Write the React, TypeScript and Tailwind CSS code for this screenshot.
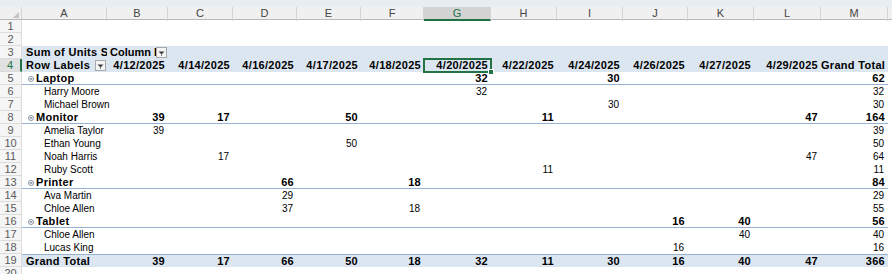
import React from "react";

const GRID = "grid grid-cols-[85px_61px_65px_64px_64px_63px_67px_66px_66px_65px_66px_67px_67px]";
const LETTERS = ["A", "B", "C", "D", "E", "F", "G", "H", "I", "J", "K", "L", "M"];
const DATES = ["4/12/2025", "4/14/2025", "4/16/2025", "4/17/2025", "4/18/2025", "4/20/2025", "4/22/2025", "4/24/2025", "4/26/2025", "4/27/2025", "4/29/2025"];

type V = number | null;
type Line = { label: string; kind: "group" | "item"; vals: V[] };

const _ = null;
const LINES: Line[] = [
  { label: "Laptop", kind: "group", vals: [_, _, _, _, _, 32, _, 30, _, _, _, 62] },
  { label: "Harry Moore", kind: "item", vals: [_, _, _, _, _, 32, _, _, _, _, _, 32] },
  { label: "Michael Brown", kind: "item", vals: [_, _, _, _, _, _, _, 30, _, _, _, 30] },
  { label: "Monitor", kind: "group", vals: [39, 17, _, 50, _, _, 11, _, _, _, 47, 164] },
  { label: "Amelia Taylor", kind: "item", vals: [39, _, _, _, _, _, _, _, _, _, _, 39] },
  { label: "Ethan Young", kind: "item", vals: [_, _, _, 50, _, _, _, _, _, _, _, 50] },
  { label: "Noah Harris", kind: "item", vals: [_, 17, _, _, _, _, _, _, _, _, 47, 64] },
  { label: "Ruby Scott", kind: "item", vals: [_, _, _, _, _, _, 11, _, _, _, _, 11] },
  { label: "Printer", kind: "group", vals: [_, _, 66, _, 18, _, _, _, _, _, _, 84] },
  { label: "Ava Martin", kind: "item", vals: [_, _, 29, _, _, _, _, _, _, _, _, 29] },
  { label: "Chloe Allen", kind: "item", vals: [_, _, 37, _, 18, _, _, _, _, _, _, 55] },
  { label: "Tablet", kind: "group", vals: [_, _, _, _, _, _, _, _, 16, 40, _, 56] },
  { label: "Chloe Allen", kind: "item", vals: [_, _, _, _, _, _, _, _, _, 40, _, 40] },
  { label: "Lucas King", kind: "item", vals: [_, _, _, _, _, _, _, _, 16, _, _, 16] },
];
const TOTALS = [39, 17, 66, 50, 18, 32, 11, 30, 16, 40, 47, 366];

function RowNum({ n, active }: { n: number; active?: boolean }) {
  return (
    <div
      className={
        active
          ? "h-[13px] w-[22px] shrink-0 border-b border-b-[#dadada] border-r-2 border-r-[#217346] bg-[#e1e1e1] text-center text-[11px] leading-[12px] text-[#217346]"
          : "h-[13px] w-[22px] shrink-0 border-b border-r border-[#dcdcdc] bg-[#f5f5f5] text-center text-[11px] leading-[12px] text-[#5b5b5b]"
      }
    >
      {n}
    </div>
  );
}

function Drop() {
  return (
    <span className="absolute right-[1px] top-[1px] flex h-[11px] w-[11px] items-center justify-center border border-[#a9a9a9] bg-[#f4f4f4]">
      <svg width="7" height="6" viewBox="0 0 7 6">
        <path d="M0.5 1.5h6L3.5 4.5z" fill="#3c3c3c" />
        <path d="M3.5 4.5v1.2" stroke="#3c3c3c" strokeWidth="1" />
      </svg>
    </span>
  );
}

function Toggle() {
  return (
    <svg width="6" height="6" viewBox="0 0 6 6" className="mr-[2px] shrink-0">
      <circle cx="3" cy="3" r="2.5" fill="#fff" stroke="#7f8a99" strokeWidth="0.9" />
      <path d="M1.8 3h2.4" stroke="#44546a" strokeWidth="1" />
    </svg>
  );
}

function Num({ v, bold }: { v: V; bold?: boolean }) {
  return (
    <div
      className={
        bold
          ? "pr-[3px] text-right text-[11px] font-bold leading-[13px] tracking-[0.3px] text-black"
          : "pr-[4px] text-right text-[10px] leading-[13px] text-black"
      }
    >
      {v ?? ""}
    </div>
  );
}

export default function App() {
  return (
    <div className="h-[274px] w-[892px] overflow-hidden bg-white font-['Liberation_Sans',Arial,sans-serif]">
      <div className="h-[7px] bg-[#e6eef2]" />
      {/* column headers */}
      <div className="flex h-[13px] border-b border-[#b8b8b8] bg-[#f0f0f0]">
        <div className="relative w-[22px] shrink-0 border-r border-[#d4d4d4]">
          <svg width="6" height="6" viewBox="0 0 6 6" className="absolute bottom-[1px] right-[2px]">
            <path d="M6 0V6H0z" fill="#c4c4c4" />
          </svg>
        </div>
        <div className={GRID}>
          {LETTERS.map((l) => (
            <div
              key={l}
              className={
                l === "G"
                  ? "border-b-2 border-r border-b-[#217346] border-r-[#d4d4d4] bg-[#d3d3d3] text-center text-[11px] leading-[12px] text-[#217346]"
                  : "border-r border-[#d4d4d4] text-center text-[11px] leading-[12px] text-[#444]"
              }
            >
              {l}
            </div>
          ))}
        </div>
        <div className="flex-1" />
      </div>

      <div className="flex">
        <RowNum n={1} />
      </div>
      <div className="flex">
        <RowNum n={2} />
      </div>

      {/* row 3 */}
      <div className="flex">
        <RowNum n={3} />
        <div className={`${GRID} h-[13px] bg-[#dce6f1]`}>
          <div className="overflow-hidden whitespace-nowrap pl-[4px] text-[11px] font-bold leading-[13px] tracking-[0.3px]">Sum of Units Sold</div>
          <div className="relative overflow-hidden whitespace-nowrap pl-[3px] text-[11px] font-bold leading-[13px]">
            <div className="mr-[11px] overflow-hidden">Column Labels</div>
            <Drop />
          </div>
          {Array.from({ length: 11 }).map((_, i) => (
            <div key={i} />
          ))}
        </div>
      </div>

      {/* row 4 */}
      <div className="flex">
        <RowNum n={4} active />
        <div className={`${GRID} h-[13px] bg-[#dce6f1]`}>
          <div className="relative whitespace-nowrap pl-[4px] text-[11px] font-bold leading-[13px] tracking-[0.3px]">
            Row Labels
            <Drop />
          </div>
          {DATES.map((d) => (
            <div key={d} className="relative whitespace-nowrap pr-[3px] text-right text-[11px] font-bold leading-[13px] tracking-[0.3px]">
              {d}
              {d === "4/20/2025" && (
                <>
                  <span className="pointer-events-none absolute -left-[1px] -right-[1px] -top-[1px] -bottom-[1px] border-2 border-[#217346]" />
                  <span className="absolute -bottom-[3px] -right-[3px] h-[6px] w-[6px] border border-white bg-[#217346]" />
                </>
              )}
            </div>
          ))}
          <div className="whitespace-nowrap pr-[3px] text-right text-[11px] font-bold leading-[13px] tracking-[0.3px]">Grand Total</div>
        </div>
      </div>

      {LINES.map((r, i) => {
        const group = r.kind === "group";
        return (
          <div key={i} className="flex">
            <RowNum n={i + 5} />
            <div className={`${GRID} h-[13px] ${group ? "border-b border-[#95b3d7]" : ""}`}>
              {group ? (
                <div className="flex items-center whitespace-nowrap pl-[6px] text-[11px] font-bold leading-[13px] tracking-[0.3px]">
                  <Toggle />
                  {r.label}
                </div>
              ) : (
                <div className="whitespace-nowrap pl-[22px] text-[10px] leading-[13px]">{r.label}</div>
              )}
              {r.vals.map((v, j) => (
                <Num key={j} v={v} bold={group} />
              ))}
            </div>
          </div>
        );
      })}

      {/* grand total */}
      <div className="flex">
        <RowNum n={19} />
        <div className={`${GRID} h-[13px] border-t border-[#95b3d7] bg-[#dce6f1]`}>
          <div className="whitespace-nowrap pl-[4px] text-[11px] font-bold leading-[12px] tracking-[0.3px]">Grand Total</div>
          {TOTALS.map((v, j) => (
            <div key={j} className="pr-[3px] text-right text-[11px] font-bold leading-[12px] tracking-[0.3px]">
              {v}
            </div>
          ))}
        </div>
      </div>
      <div className="flex">
        <RowNum n={20} />
      </div>
    </div>
  );
}
